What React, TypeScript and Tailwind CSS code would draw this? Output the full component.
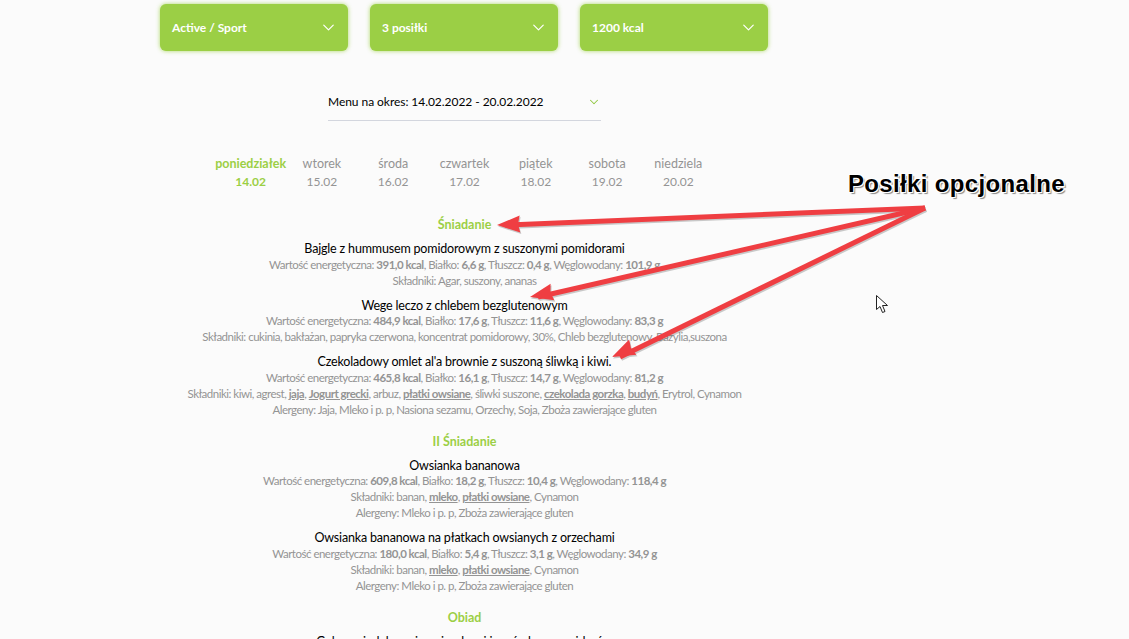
import { ChevronDown } from "lucide-react";
import type { ReactNode } from "react";

const filters = ["Active / Sport", "3 posiłki", "1200 kcal"];

const days = [
  { name: "poniedziałek", date: "14.02", active: true },
  { name: "wtorek", date: "15.02" },
  { name: "środa", date: "16.02" },
  { name: "czwartek", date: "17.02" },
  { name: "piątek", date: "18.02" },
  { name: "sobota", date: "19.02" },
  { name: "niedziela", date: "20.02" },
];

const arrows = [
  { x: 497, y: 225 },
  { x: 530, y: 297 },
  { x: 612, y: 357 },
];

function Tag({ children }: { children: ReactNode }) {
  return <span className="font-bold underline">{children}</span>;
}

function Meal({
  title,
  kcal,
  protein,
  fat,
  carbs,
  children,
}: {
  title: string;
  kcal: string;
  protein: string;
  fat: string;
  carbs: string;
  children?: ReactNode;
}) {
  return (
    <div className="mb-[9px]">
      <h3 className="text-[12.5px] leading-[15.5px] tracking-[-0.17px] text-black">{title}</h3>
      <p>
        Wartość energetyczna: <b>{kcal} kcal</b>, Białko: <b>{protein} g</b>, Tłuszcz: <b>{fat} g</b>, Węglowodany:{" "}
        <b>{carbs} g</b>
      </p>
      {children}
    </div>
  );
}

function SectionTitle({ children }: { children: ReactNode }) {
  return (
    <h2 className="mb-[8px] mt-[15px] text-[12.5px] font-bold leading-[17px] tracking-normal text-[#9bcf45]">
      {children}
    </h2>
  );
}

// tail end of all three arrows sits at the same spot
function arrowHead(x: number, y: number) {
  const dx = 925 - x;
  const dy = 208 - y;
  const len = Math.hypot(dx, dy);
  const ux = dx / len;
  const uy = dy / len;
  const bx = x + ux * 23;
  const by = y + uy * 23;
  return `${x},${y} ${bx - uy * 8.5},${by + ux * 8.5} ${bx + ux * -2},${by + uy * -2} ${bx + uy * 8.5},${by - ux * 8.5}`;
}

function Annotation() {
  return (
    <svg className="pointer-events-none absolute left-0 top-0" width="1129" height="639" viewBox="0 0 1129 639">
      <g transform="translate(1 1.5)" opacity="0.3">
        {arrows.map((a) => (
          <g key={a.x}>
            <line x1="925" y1="208" x2={a.x + 8} y2={a.y} stroke="#555" strokeWidth="5" />
            <polygon points={arrowHead(a.x, a.y)} fill="#555" />
          </g>
        ))}
      </g>
      {arrows.map((a) => (
        <g key={a.x}>
          <line x1="925" y1="208" x2={a.x + 8} y2={a.y} stroke="#ef3e42" strokeWidth="5" />
          <polygon points={arrowHead(a.x, a.y)} fill="#ef3e42" />
        </g>
      ))}
      <path
        d="M876.5 295.5v14l3.5-3 2.5 6 2.5-1-2.5-6h5z"
        fill="#fff"
        stroke="#222"
        strokeWidth="1"
        strokeLinejoin="round"
      />
    </svg>
  );
}

export default function App() {
  return (
    <div className="relative h-[639px] w-[1129px] overflow-hidden bg-[#fbfbfb] font-['Lato','Noto_Sans',sans-serif]">
      <div className="ml-[160px] w-[609px]">
        <div className="flex gap-[22px] pt-[4px]">
          {filters.map((f) => (
            <div
              key={f}
              className="flex h-[47px] w-[188px] items-center justify-between rounded-[6px] bg-[#9bcf45] pl-[12px] pr-[10px] text-[12px] font-bold text-white shadow-[0_0_4px_rgba(155,207,69,0.8)]"
            >
              {f}
              <ChevronDown size={19} strokeWidth={1.5} />
            </div>
          ))}
        </div>

        <div className="mx-auto mt-[41px] flex h-[29px] w-[273px] items-start justify-between border-b border-[#d3d6de] text-[12px] leading-[20px] tracking-[-0.05px] text-black">
          Menu na okres: 14.02.2022 - 20.02.2022
          <ChevronDown size={14} strokeWidth={1.75} className="mr-0 mt-[3px] text-[#8fc63f]" />
        </div>

        <div className="mx-auto mt-[34px] grid w-[499px] grid-cols-7 text-center text-[12.5px] leading-[17.5px] text-[#949494]">
          {days.map((d) => (
            <div key={d.name} className={d.active ? "font-bold text-[#9bcf45]" : ""}>
              <div>{d.name}</div>
              <div className="text-[12px]">{d.date}</div>
            </div>
          ))}
        </div>

        <div className="-mx-[50px] mt-[26px] text-center text-[11.5px] leading-[16px] tracking-[-0.5px] text-[#949494]">
          <SectionTitle>Śniadanie</SectionTitle>
          <Meal title="Bajgle z hummusem pomidorowym z suszonymi pomidorami" kcal="391,0" protein="6,6" fat="0,4" carbs="101,9">
            <p>Składniki: Agar, suszony, ananas</p>
          </Meal>
          <Meal title="Wege leczo z chlebem bezglutenowym" kcal="484,9" protein="17,6" fat="11,6" carbs="83,3">
            <p>Składniki: cukinia, bakłażan, papryka czerwona, koncentrat pomidorowy, 30%, Chleb bezglutenowy, Bazylia,suszona</p>
          </Meal>
          <Meal title="Czekoladowy omlet al'a brownie z suszoną śliwką i kiwi." kcal="465,8" protein="16,1" fat="14,7" carbs="81,2">
            <p>
              Składniki: kiwi, agrest, <Tag>jaja</Tag>, <Tag>Jogurt grecki</Tag>, arbuz, <Tag>płatki owsiane</Tag>, śliwki suszone,{" "}
              <Tag>czekolada gorzka</Tag>, <Tag>budyń</Tag>, Erytrol, Cynamon
            </p>
            <p>Alergeny: Jaja, Mleko i p. p, Nasiona sezamu, Orzechy, Soja, Zboża zawierające gluten</p>
          </Meal>

          <SectionTitle>II Śniadanie</SectionTitle>
          <Meal title="Owsianka bananowa" kcal="609,8" protein="18,2" fat="10,4" carbs="118,4">
            <p>
              Składniki: banan, <Tag>mleko</Tag>, <Tag>płatki owsiane</Tag>, Cynamon
            </p>
            <p>Alergeny: Mleko i p. p, Zboża zawierające gluten</p>
          </Meal>
          <Meal title="Owsianka bananowa na płatkach owsianych z orzechami" kcal="180,0" protein="5,4" fat="3,1" carbs="34,9">
            <p>
              Składniki: banan, <Tag>mleko</Tag>, <Tag>płatki owsiane</Tag>, Cynamon
            </p>
            <p>Alergeny: Mleko i p. p, Zboża zawierające gluten</p>
          </Meal>

          <SectionTitle>Obiad</SectionTitle>
          <h3 className="text-[12.5px] leading-[15.5px] tracking-[-0.17px] text-black">
            Gulasz z indyka z ziemniaczkami i surówką z pomidorów
          </h3>
        </div>
      </div>

      <Annotation />
      <div className="absolute left-[848px] top-[170px] font-['Liberation_Sans',Arial,sans-serif] text-[24px] font-bold leading-[28px] tracking-[0.35px] text-black [text-shadow:1px_1px_0_#fff,-1px_-1px_0_#fff,1px_-1px_0_#fff,-1px_1px_0_#fff,2px_2px_1px_#888]">
        Posiłki opcjonalne
      </div>
    </div>
  );
}
